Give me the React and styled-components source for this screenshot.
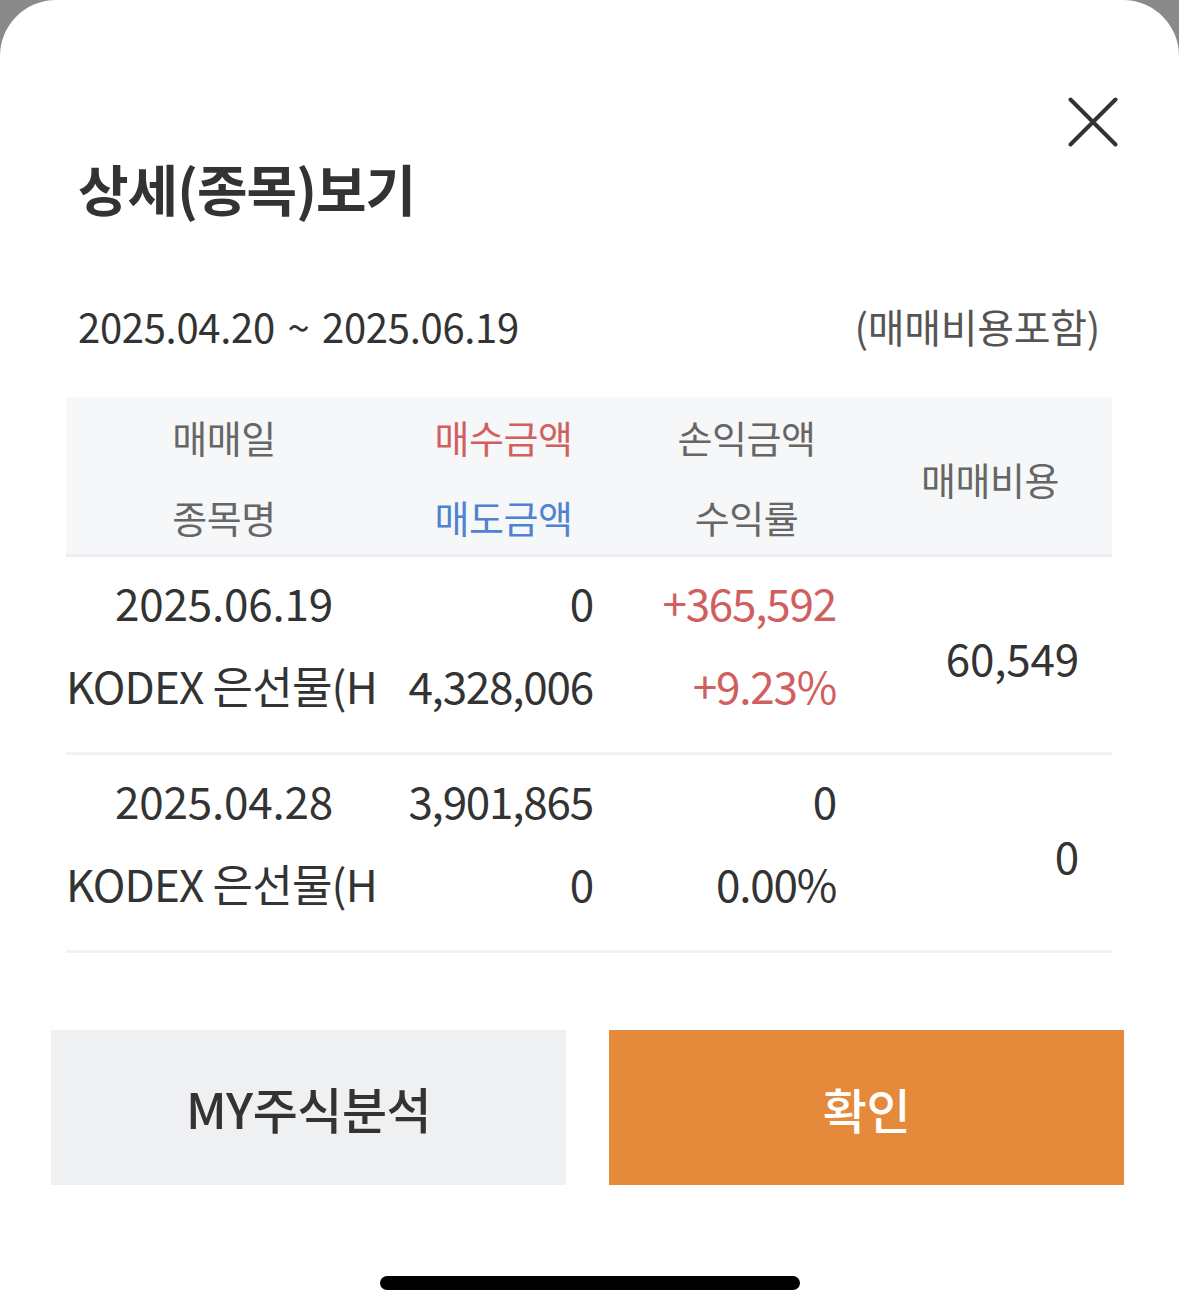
import React from "react";
import styled, { createGlobalStyle } from "styled-components";

const GlobalStyle = createGlobalStyle`
  html, body { margin: 0; padding: 0; background: #ffffff; }
  body { font-family: "Noto Sans CJK KR", "Noto Sans", sans-serif; -webkit-font-smoothing: antialiased; }
  * { box-sizing: border-box; }
`;

const Backdrop = styled.div`
  width: 1179px;
  min-height: 1315px;
  background: linear-gradient(#8a8a8a 0px, #8a8a8a 60px, #d8d8d8 90px, #ffffff 100px);
`;

const Sheet = styled.div`
  background: #ffffff;
  border-radius: 56px 56px 0 0;
  min-height: 1315px;
  display: flex;
  flex-direction: column;
`;

const TopBar = styled.div`
  display: flex;
  justify-content: flex-end;
  padding: 97px 61px 0 0;
`;

const CloseButton = styled.button`
  width: 50px;
  height: 50px;
  padding: 0;
  border: none;
  background: transparent;
  display: flex;
  svg { display: block; }
`;

const Title = styled.h1`
  margin: 8px 0 0 78px;
  font-size: 55px;
  line-height: 64px;
  font-weight: 700;
  color: #333333;
  letter-spacing: -1px;
`;

const Period = styled.div`
  display: flex;
  justify-content: space-between;
  align-items: center;
  margin: 82px 79px 0 78px;
  height: 50px;
`;

const PeriodText = styled.span`
  font-size: ${(p) => p.$size}px;
  color: ${(p) => p.$color};
  letter-spacing: -0.3px;
  word-spacing: ${(p) => p.$wordSpacing || 0}px;
`;

const Table = styled.div`
  margin: 46px 67px 0 66px;
`;

const Grid = styled.div`
  display: grid;
  grid-template-columns: 316px 243px 243px 244px;
`;

const HeadRow = styled(Grid)`
  background: #f6f7f9;
  height: 160px;
  border-bottom: 3px solid #eceef1;
`;

const BodyRow = styled(Grid)`
  height: 198px;
  padding: 4px 0 0;
  border-bottom: 3px solid #f0f1f3;
`;

const Stack = styled.div`
  display: flex;
  flex-direction: column;
  min-width: 0;
`;

const HeadLabel = styled.div`
  height: 80px;
  line-height: 80px;
  text-align: center;
  font-size: 38px;
  color: ${(p) => p.$color || "#666666"};
  letter-spacing: -0.5px;
`;

const HeadCenter = styled.div`
  display: flex;
  align-items: center;
  justify-content: center;
  padding-top: 3px;
  font-size: 38px;
  color: #666666;
  letter-spacing: -0.5px;
`;

const Line = styled.div`
  height: 83px;
  line-height: 83px;
  font-size: 44px;
  white-space: nowrap;
  overflow: hidden;
  color: ${(p) => p.$color || "#333333"};
  text-align: ${(p) => p.$align || "right"};
  padding-right: ${(p) => (p.$align === "right" || !p.$align ? "32px" : "0")};
  letter-spacing: ${(p) => (p.$tight ? "-1.2px" : p.$align === "left" ? "-0.8px" : "-0.2px")};
`;

const Fee = styled.div`
  display: flex;
  align-items: center;
  justify-content: flex-end;
  padding: 0 33px 0 0;
  font-size: 44px;
  color: #333333;
  letter-spacing: -0.2px;
`;

const Actions = styled.div`
  display: flex;
  gap: 43px;
  margin: 77px 55px 0 51px;
`;

const ActionButton = styled.button`
  flex: 1;
  height: 155px;
  border: none;
  border-radius: 0;
  font-family: inherit;
  font-size: ${(p) => (p.$primary ? 48 : 49)}px;
  font-weight: 500;
  letter-spacing: -0.5px;
  background: ${(p) => (p.$primary ? "#e5893b" : "#eff0f2")};
  color: ${(p) => (p.$primary ? "#ffffff" : "#333333")};
`;

const HomeIndicator = styled.div`
  width: 420px;
  height: 14px;
  border-radius: 7px;
  background: #000000;
  margin: 91px auto 0;
`;

const RED = "#d06060";
const BLUE = "#4f82d0";

const rows = [
  {
    date: "2025.06.19",
    name: "KODEX 은선물(H",
    buy: "0",
    sell: "4,328,006",
    pl: "+365,592",
    rate: "+9.23%",
    plColor: RED,
    fee: "60,549",
  },
  {
    date: "2025.04.28",
    name: "KODEX 은선물(H",
    buy: "3,901,865",
    sell: "0",
    pl: "0",
    rate: "0.00%",
    plColor: "#333333",
    fee: "0",
  },
];

export default function App() {
  return (
    <>
      <GlobalStyle />
      <Backdrop>
        <Sheet>
          <TopBar>
            <CloseButton aria-label="닫기">
              <svg width="50" height="50" viewBox="0 0 50 50">
                <path d="M2.5 2.5 L47.5 47.5 M47.5 2.5 L2.5 47.5" stroke="#333333" strokeWidth="4" strokeLinecap="round" fill="none" />
              </svg>
            </CloseButton>
          </TopBar>
          <Title>상세(종목)보기</Title>
          <Period>
            <PeriodText $size={40} $color="#333333" $wordSpacing={4}>2025.04.20 ~ 2025.06.19</PeriodText>
            <PeriodText $size={40} $color="#555555">(매매비용포함)</PeriodText>
          </Period>
          <Table>
            <HeadRow>
              <Stack>
                <HeadLabel>매매일</HeadLabel>
                <HeadLabel>종목명</HeadLabel>
              </Stack>
              <Stack>
                <HeadLabel $color={RED}>매수금액</HeadLabel>
                <HeadLabel $color={BLUE}>매도금액</HeadLabel>
              </Stack>
              <Stack>
                <HeadLabel>손익금액</HeadLabel>
                <HeadLabel>수익률</HeadLabel>
              </Stack>
              <HeadCenter>매매비용</HeadCenter>
            </HeadRow>
            {rows.map((r, i) => (
              <BodyRow key={i}>
                <Stack>
                  <Line $align="center">{r.date}</Line>
                  <Line $align="left">{r.name}</Line>
                </Stack>
                <Stack>
                  <Line $tight>{r.buy}</Line>
                  <Line $tight>{r.sell}</Line>
                </Stack>
                <Stack>
                  <Line $tight $color={r.plColor}>{r.pl}</Line>
                  <Line $tight $color={r.plColor}>{r.rate}</Line>
                </Stack>
                <Fee>{r.fee}</Fee>
              </BodyRow>
            ))}
          </Table>
          <Actions>
            <ActionButton>MY주식분석</ActionButton>
            <ActionButton $primary>확인</ActionButton>
          </Actions>
          <HomeIndicator />
        </Sheet>
      </Backdrop>
    </>
  );
}
